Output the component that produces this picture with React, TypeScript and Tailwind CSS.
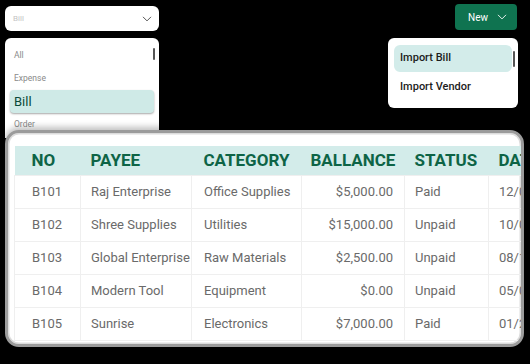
import React from "react";

const rows = [
  ["B101", "Raj Enterprise", "Office Supplies", "$5,000.00", "Paid", "12/05/2024"],
  ["B102", "Shree Supplies", "Utilities", "$15,000.00", "Unpaid", "10/08/2024"],
  ["B103", "Global Enterprise", "Raw Materials", "$2,500.00", "Unpaid", "08/15/2024"],
  ["B104", "Modern Tool", "Equipment", "$0.00", "Unpaid", "05/01/2024"],
  ["B105", "Sunrise", "Electronics", "$7,000.00", "Paid", "01/20/2024"],
];

function Chevron({ className }: { className?: string }) {
  return (
    <svg viewBox="0 0 12 8" className={className} fill="none" stroke="currentColor" strokeWidth="1.2" strokeLinecap="round" strokeLinejoin="round">
      <path d="M1 1.5 L6 6.5 L11 1.5" />
    </svg>
  );
}

export default function App() {
  return (
    <div className="relative w-[530px] h-[364px] bg-black overflow-hidden font-['Roboto',sans-serif]">
      {/* top bar */}
      <div className="flex justify-between items-start pl-[5px] pr-[13px]">
        <div className="mt-[6px] w-[154px] h-[25px] bg-white rounded-[6px] flex items-center justify-between pl-[8px] pr-[7px]">
          <span className="text-[8px] text-[#c4c4c4]">Bill</span>
          <Chevron className="w-[10px] h-[6px] text-[#444]" />
        </div>
        <div className="mt-[4px] w-[62px] h-[26px] bg-[#0f7350] rounded-[4px] flex items-center justify-center gap-[9px] pl-[3px]">
          <span className="text-[10px] text-white">New</span>
          <Chevron className="w-[10px] h-[6px] text-white" />
        </div>
      </div>

      {/* left dropdown */}
      <div className="absolute left-[5px] top-[38px] w-[154px] h-[100px] bg-white rounded-t-[6px] z-0">
        <div className="absolute right-[4px] top-[10px] w-[2px] h-[12px] bg-[#555] rounded-full" />
        <div className="pl-[9px] pt-[12px] text-[8.5px] text-[#8a8a8a] leading-[10px]">All</div>
        <div className="pl-[9px] pt-[13px] text-[8.5px] text-[#8a8a8a] leading-[10px]">Expense</div>
        <div className="mx-[5px] mt-[7px] h-[23px] bg-[#cfeae7] rounded-[4px] shadow-[0_1px_2px_rgba(0,0,0,0.35)] flex items-center pl-[4px]">
          <span className="text-[13px] text-[#0b4a38]">Bill</span>
        </div>
        <div className="pl-[9px] pt-[6px] text-[8.5px] text-[#8a8a8a] leading-[10px]">Order</div>
      </div>

      {/* right dropdown */}
      <div className="absolute left-[388px] top-[38px] w-[130px] h-[70px] bg-white rounded-[6px] z-20 px-[6px] pt-[7px]">
        <div className="absolute right-[3px] top-[13px] w-[2px] h-[16px] bg-[#555] rounded-full" />
        <div className="h-[27px] bg-[#d3ecea] rounded-[6px] flex items-center pl-[6px] text-[11px] text-[#1c1c1c] font-medium">Import Bill</div>
        <div className="h-[30px] flex items-center pl-[6px] text-[11px] text-[#1c1c1c] font-medium">Import Vendor</div>
      </div>

      {/* card */}
      <div className="relative z-10 mt-[99px] ml-[5px] w-[519px] h-[217px] bg-white rounded-[14px] border-[3px] border-[#9b9b9b] shadow-[0_-3px_6px_rgba(0,0,0,0.25),inset_0_0_0_1.5px_#dcdcdc] overflow-hidden">
        <div className="pt-[13px] pl-[6px] pr-[2px] overflow-hidden">
          <table className="border-collapse table-fixed w-[574px]">
            <colgroup>
              <col className="w-[66px]" />
              <col className="w-[111px]" />
              <col className="w-[110px]" />
              <col className="w-[103px]" />
              <col className="w-[84px]" />
              <col className="w-[100px]" />
            </colgroup>
            <thead>
              <tr className="h-[29px] bg-[#d3ecea] text-[#0d6446] text-[17px] font-bold">
                <th className="text-left font-bold pl-[17px] leading-none">NO</th>
                <th className="text-left font-bold pl-[10px] leading-none">PAYEE</th>
                <th className="text-left font-bold pl-[12px] leading-none">CATEGORY</th>
                <th className="text-left font-bold pl-[9px] leading-none whitespace-nowrap">BALLANCE</th>
                <th className="text-left font-bold pl-[10px] leading-none">STATUS</th>
                <th className="text-left font-bold pl-[10px] leading-none">DATE</th>
              </tr>
            </thead>
            <tbody>
              {rows.map((r) => (
                <tr key={r[0]} className="h-[33px] text-[13px] text-[#6a6a6a]">
                  <td className="border border-[#efefef] pl-[17px] whitespace-nowrap">{r[0]}</td>
                  <td className="border border-[#efefef] pl-[10px] whitespace-nowrap">{r[1]}</td>
                  <td className="border border-[#efefef] pl-[12px] whitespace-nowrap">{r[2]}</td>
                  <td className="border border-[#efefef] pr-[11px] text-right whitespace-nowrap">{r[3]}</td>
                  <td className="border border-[#efefef] pl-[10px] whitespace-nowrap">{r[4]}</td>
                  <td className="border border-[#efefef] pl-[10px] whitespace-nowrap">{r[5]}</td>
                </tr>
              ))}
            </tbody>
          </table>
        </div>
      </div>
    </div>
  );
}
